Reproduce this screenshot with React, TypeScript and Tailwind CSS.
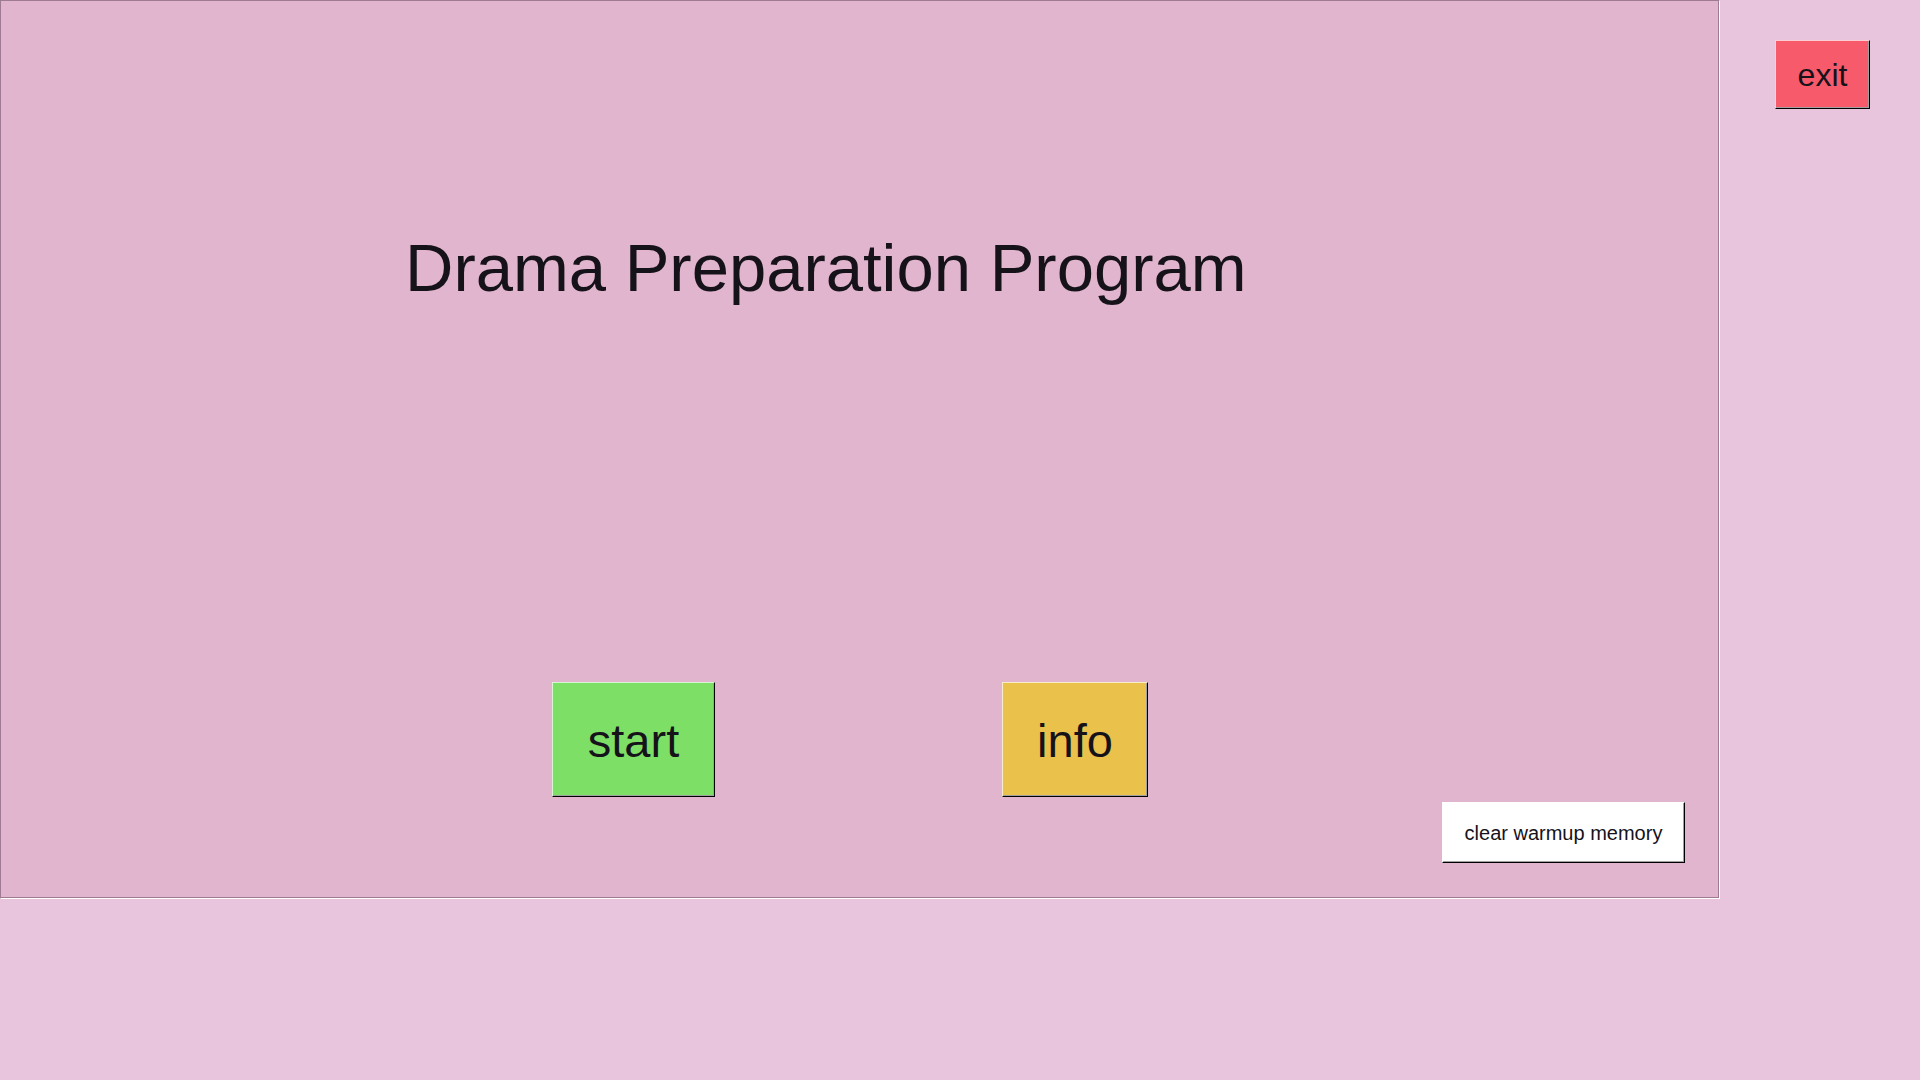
const font = { fontFamily: '"Liberation Sans", Arial, sans-serif' }

type RaisedButtonProps = {
  label: string
  className: string
}

function RaisedButton({ label, className }: RaisedButtonProps) {
  return (
    <button
      className={`flex items-center justify-center border-t border-l border-b border-r border-t-white/70 border-l-white/70 border-b-black border-r-black shadow-[inset_-1px_-1px_0_#a0a0a0] text-[#16121a] leading-none ${className}`}
    >
      {label}
    </button>
  )
}

export default function App() {
  return (
    <div className="w-[1920px] h-[1080px] bg-[#e8c5dc] flex items-start overflow-hidden" style={font}>
      <div className="w-[1719px] h-[898px] shrink-0 bg-[#e1b5ce] border border-[#9f7b93] shadow-[1px_1px_0_#ffffff] flex flex-col">
        <h1 className="mt-[233px] pl-[404px] text-[67px] leading-[67px] font-normal text-[#16121a]">
          Drama Preparation Program
        </h1>

        <div className="mt-[381px] flex pl-[551px]">
          <RaisedButton label="start" className="w-[163px] h-[115px] bg-[#7ddf66] text-[47px] pt-[2px]" />
          <RaisedButton label="info" className="ml-[287px] w-[146px] h-[115px] bg-[#e9c14b] text-[47px] pt-[2px]" />
        </div>

        <div className="mt-[5px] flex pl-[1441px]">
          <RaisedButton label="clear warmup memory" className="w-[243px] h-[61px] bg-white text-[20px] pt-[1px]" />
        </div>
      </div>

      <div className="ml-[56px] mt-[40px]">
        <RaisedButton label="exit" className="w-[95px] h-[69px] bg-[#f65a6b] text-[32px]" />
      </div>
    </div>
  )
}
